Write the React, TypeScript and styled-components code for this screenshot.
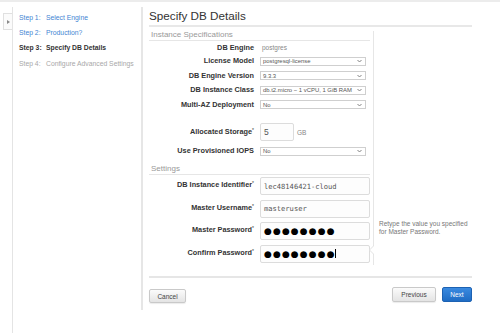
import styled, { createGlobalStyle } from "styled-components";

const GlobalStyle = createGlobalStyle`
  html, body {
    margin: 0;
    padding: 0;
    background: #ffffff;
    font-family: "Liberation Sans", Arial, sans-serif;
  }
`;

const Page = styled.div`
  width: 500px;
  height: 333px;
  overflow: hidden;
  border-top: 2px solid #ececec;
  box-sizing: border-box;
  padding-top: 5px;
`;

const Shell = styled.div`
  display: flex;
  align-items: flex-start;
`;

const Toggle = styled.div`
  margin: 6px 0 0 3px;
  width: 9px;
  height: 17px;
  box-sizing: border-box;
  border: 1px solid #e0e0e0;
  border-right: 0;
  background: #fbfbfb;
  display: flex;
  align-items: center;
  justify-content: center;
`;

const Sidebar = styled.nav`
  width: 129px;
  height: 326px;
  box-sizing: border-box;
  border-left: 1px solid #e4e4e4;
  padding: 3px 0 0 6px;
`;

const NavItem = styled.div<{ $state: "done" | "current" | "todo" }>`
  display: flex;
  height: 15.2px;
  align-items: center;
  font-size: 6.8px;
  white-space: nowrap;
  font-weight: ${(p) => (p.$state === "current" ? 700 : 400)};
  color: ${(p) =>
    p.$state === "done" ? "#3f85d3" : p.$state === "current" ? "#333333" : "#a8a8a8"};
`;

const StepNo = styled.span`
  width: 27px;
  flex: none;
`;

const Main = styled.main`
  width: 323px;
  border-left: 2px solid #e6e6e6;
  padding: 0 0 7px 6px;
`;

const Heading = styled.h1`
  margin: 0;
  height: 18px;
  line-height: 18px;
  font-size: 11.7px;
  font-weight: 400;
  color: #333333;
  border-bottom: 2px solid #e8e8e8;
`;

const Body = styled.div`
  display: flex;
  margin-top: 3px;
`;

const FormCol = styled.div`
  width: 222px;
  padding-bottom: 2.5px;
`;

const SectionTitle = styled.div<{ $gap?: number }>`
  margin-top: ${(p) => p.$gap ?? 0}px;
  margin-right: 1px;
  padding-left: 2px;
  height: 10px;
  line-height: 10px;
  font-size: 8px;
  color: #999999;
  border-bottom: 1px solid #e6e6e6;
`;

const Row = styled.div<{ $h: number; $gap?: number; $top?: boolean }>`
  display: flex;
  align-items: ${(p) => (p.$top ? "flex-start" : "center")};
  height: ${(p) => p.$h}px;
  margin-top: ${(p) => p.$gap ?? 0}px;
`;

const Label = styled.label<{ $top?: boolean }>`
  width: 105px;
  flex: none;
  text-align: right;
  font-size: 7.3px;
  font-weight: 700;
  color: #333333;
  white-space: nowrap;
  padding-top: ${(p) => (p.$top ? 3 : 0)}px;
  line-height: 10px;
  margin-right: 6px;

  sup {
    font-size: 5px;
    font-weight: 400;
    vertical-align: 2px;
    line-height: 0;
  }
`;

const Plain = styled.span`
  font-size: 6.5px;
  color: #888888;
  padding-left: 2px;
`;

const Select = styled.div`
  width: 106px;
  height: 9px;
  box-sizing: border-box;
  border: 1px solid #cfcfcf;
  background: #ffffff;
  display: flex;
  align-items: center;
  justify-content: space-between;
  padding: 0 3px 0 2px;
  font-size: 5.9px;
  color: #555555;
  white-space: nowrap;
  overflow: hidden;

  svg {
    flex: none;
  }
`;

const Input = styled.div<{ $w: number; $mono?: boolean }>`
  width: ${(p) => p.$w}px;
  height: 18px;
  box-sizing: border-box;
  border: 1px solid #dcdcdc;
  border-radius: 2px;
  background: #fdfdfd;
  display: flex;
  align-items: center;
  padding-left: 3px;
  color: #555555;
  font-family: ${(p) => (p.$mono ? '"DejaVu Sans Mono", monospace' : '"Liberation Sans", Arial, sans-serif')};
  font-size: ${(p) => (p.$mono ? 7.1 : 8.5)}px;
  white-space: nowrap;
`;

const Dots = styled.span`
  font-family: "DejaVu Sans", sans-serif;
  font-size: 9px;
  letter-spacing: 1.1px;
  color: #000000;
`;

const Caret = styled.span`
  display: inline-block;
  width: 1px;
  height: 9px;
  background: #000000;
  margin-left: -1px;
`;

const Unit = styled.span`
  font-size: 6.5px;
  color: #888888;
  margin-left: 3px;
  padding-top: 2px;
`;

const HelpCol = styled.aside`
  position: relative;
  flex: 1;
  margin-left: 2px;
  margin-top: 1px;
  border-left: 1px solid #e6e6e6;
  padding: 188.6px 0 0 5px;
  font-size: 6.5px;
  line-height: 8.7px;
  color: #777777;
`;

const Notch = styled.span`
  position: absolute;
  left: -5px;
  top: 214px;
  width: 0;
  height: 0;
  border-top: 5px solid transparent;
  border-bottom: 5px solid transparent;
  border-right: 5px solid #e2e2e2;

  &::after {
    content: "";
    position: absolute;
    left: 1px;
    top: -4px;
    border-top: 4px solid transparent;
    border-bottom: 4px solid transparent;
    border-right: 4px solid #ffffff;
  }
`;

const Divider = styled.hr`
  margin: 11px 0 0 0;
  height: 0;
  border: 0;
  border-top: 2px solid #e6e6e6;
`;

const ButtonRow = styled.div`
  display: flex;
  align-items: flex-start;
  gap: 6px;
  margin-top: 9px;
`;

const Button = styled.button<{ $primary?: boolean; $w: number; $drop?: number }>`
  width: ${(p) => p.$w}px;
  height: ${(p) => (p.$drop ? 14 : 15)}px;
  margin-top: ${(p) => p.$drop ?? 0}px;
  padding: 0;
  border-radius: 2px;
  font-family: "Liberation Sans", Arial, sans-serif;
  font-size: 6.5px;
  cursor: pointer;
  border: 1px solid ${(p) => (p.$primary ? "#1d62b3" : "#c9c9c9")};
  color: ${(p) => (p.$primary ? "#ffffff" : "#444444")};
  background: ${(p) =>
    p.$primary
      ? "linear-gradient(#3a8ae0, #1f6cc4)"
      : "linear-gradient(#fbfbfb, #e4e4e4)"};
  box-shadow: ${(p) => (p.$primary ? "none" : "0 1px 1px rgba(0,0,0,0.08)")};
`;

const Spacer = styled.div`
  flex: 1;
`;

function Chevron() {
  return (
    <svg width="5" height="4" viewBox="0 0 5 4">
      <path d="M0.5 1 L2.5 3 L4.5 1" fill="none" stroke="#777" strokeWidth="0.9" />
    </svg>
  );
}

const steps: { no: string; name: string; state: "done" | "current" | "todo" }[] = [
  { no: "Step 1:", name: "Select Engine", state: "done" },
  { no: "Step 2:", name: "Production?", state: "done" },
  { no: "Step 3:", name: "Specify DB Details", state: "current" },
  { no: "Step 4:", name: "Configure Advanced Settings", state: "todo" },
];

const selects = [
  { label: "License Model", value: "postgresql-license" },
  { label: "DB Engine Version", value: "9.3.3" },
  { label: "DB Instance Class", value: "db.t2.micro \u2212 1 vCPU, 1 GiB RAM" },
  { label: "Multi-AZ Deployment", value: "No" },
];

export default function App() {
  return (
    <>
      <GlobalStyle />
      <Page>
        <Shell>
          <Toggle>
            <svg width="3" height="4" viewBox="0 0 3 4">
              <path d="M0 0 L3 2 L0 4 Z" fill="#8a8a8a" />
            </svg>
          </Toggle>
          <Sidebar>
            {steps.map((s) => (
              <NavItem key={s.no} $state={s.state}>
                <StepNo>{s.no}</StepNo>
                <span>{s.name}</span>
              </NavItem>
            ))}
          </Sidebar>
          <Main>
            <Heading>Specify DB Details</Heading>
            <Body>
              <FormCol>
                <SectionTitle>Instance Specifications</SectionTitle>
                <Row $h={13}>
                  <Label>DB Engine</Label>
                  <Plain>postgres</Plain>
                </Row>
                {selects.map((s) => (
                  <Row key={s.label} $h={14.5}>
                    <Label>{s.label}</Label>
                    <Select>
                      <span>{s.value}</span>
                      <Chevron />
                    </Select>
                  </Row>
                ))}
                <Row $h={18} $gap={10.5}>
                  <Label>
                    Allocated Storage<sup>*</sup>
                  </Label>
                  <Input $w={34}>5</Input>
                  <Unit>GB</Unit>
                </Row>
                <Row $h={14} $gap={3.5}>
                  <Label>Use Provisioned IOPS</Label>
                  <Select>
                    <span>No</span>
                    <Chevron />
                  </Select>
                </Row>
                <SectionTitle $gap={6}>Settings</SectionTitle>
                <Row $h={18} $gap={2} $top>
                  <Label $top>
                    DB Instance Identifier<sup>*</sup>
                  </Label>
                  <Input $w={110} $mono>
                    lec48146421-cloud
                  </Input>
                </Row>
                <Row $h={18} $gap={4.5} $top>
                  <Label $top>
                    Master Username<sup>*</sup>
                  </Label>
                  <Input $w={110} $mono>
                    masteruser
                  </Input>
                </Row>
                <Row $h={18} $gap={4.5} $top>
                  <Label $top>
                    Master Password<sup>*</sup>
                  </Label>
                  <Input $w={110}>
                    <Dots>{"\u25CF".repeat(8)}</Dots>
                  </Input>
                </Row>
                <Row $h={18} $gap={4.5} $top>
                  <Label $top>
                    Confirm Password<sup>*</sup>
                  </Label>
                  <Input $w={110}>
                    <Dots>{"\u25CF".repeat(8)}</Dots>
                    <Caret />
                  </Input>
                </Row>
              </FormCol>
              <HelpCol>
                <Notch />
                Retype the value you specified
                <br />
                for Master Password.
              </HelpCol>
            </Body>
            <Divider />
            <ButtonRow>
              <Button $w={37} $drop={2}>
                Cancel
              </Button>
              <Spacer />
              <Button $w={44}>Previous</Button>
              <Button $w={30} $primary>
                Next
              </Button>
            </ButtonRow>
          </Main>
        </Shell>
      </Page>
    </>
  );
}
